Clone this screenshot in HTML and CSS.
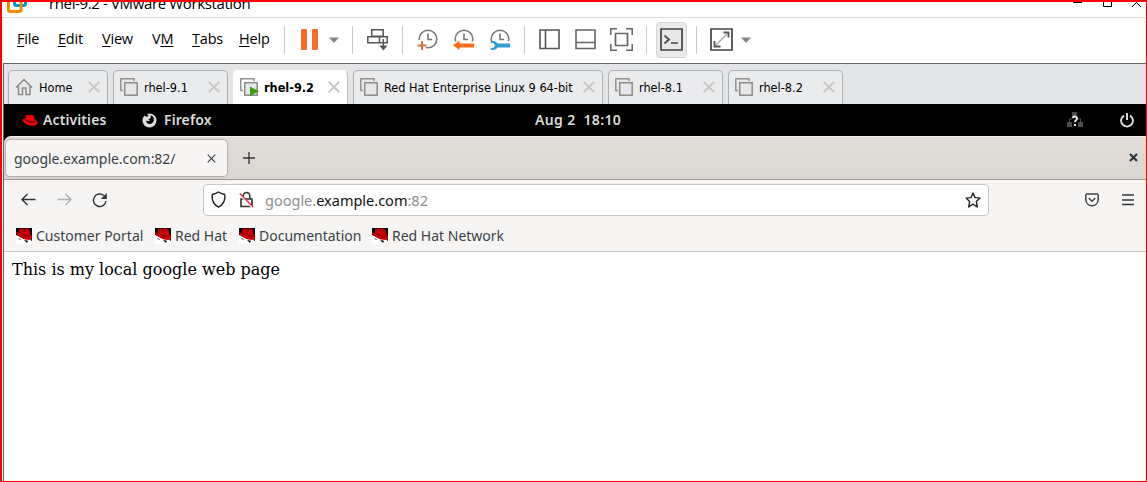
FILE: index.html
```html
<!DOCTYPE html>
<html lang="en">
<head>
<meta charset="utf-8">
<title>rhel-9.2 - VMware Workstation</title>
<link rel="stylesheet" href="styles.css">
</head>
<body>
<svg width="0" height="0" class="defs">
  <defs>
    <symbol id="vm" viewBox="0 0 18 18"><path d="M3 12.500H.8V.8H14V3" fill="none" stroke="#929292" stroke-width="1.500"/><rect x="4.700" y="4.700" width="12.500" height="12.500" fill="#e6e7e9" stroke="#8b8b8b" stroke-width="1.500"/></symbol>
    <symbol id="cross" viewBox="0 0 12 12"><path d="M.8.8l10.400 10.400M11.200.8L.8 11.200" stroke="#c4c4c4" stroke-width="1.800"/></symbol>
    <symbol id="clock" viewBox="0 0 22 22"><circle cx="11" cy="10" r="8.800" fill="none" stroke="#777" stroke-width="1.600"/><path d="M11 4.500v6h4" fill="none" stroke="#777" stroke-width="1.600"/></symbol>
    <symbol id="shadowman" viewBox="0 0 16 16"><path fill="#fff" d="M0 0h16v16H0z"/><path fill="#000" d="M0 0h16v12l-3-1-5 0-8-4z"/><path fill="#fff" d="M1 7.500l6 3.500 4 1 4-.5V16H0V8z"/><path fill="#c00" d="M3 1.500L5.500.5 8 1.200 11 .3l2.500 1.700 1 4.300L16 8v2.500L13.500 12 9 11.500 4 9 .3 6V4.300l3 .4z"/><path d="M3.500 4.800L7 7.300l5 1.200 2-1M7 3.200l3-.5" stroke="#600" stroke-width=".9" fill="none"/><path fill="#000" d="M8 12l4 .8-1 2.200-1-1zM2 10l3 1.200-1 .6zM14.500 12l1.500-1v2z"/></symbol>
  </defs>
</svg>
<div class="frame">
  <header class="titlebar">
    <svg class="logo" width="20" height="20" viewBox="0 0 20 20"><rect x="7.500" y="1.500" width="11" height="11" rx="2" fill="none" stroke="#0095d3" stroke-width="3"/><path d="M5 6.500H3.500a2 2 0 0 0-2 2v8a2 2 0 0 0 2 2h8.500a2 2 0 0 0 2-2V9" fill="none" stroke="#f38b00" stroke-width="3"/></svg>
    <span class="title">rhel-9.2 - VMware Workstation</span>
    <svg class="winctl" width="72" height="8" viewBox="0 0 72 8"><path d="M0 .5h9" stroke="#000"/><path d="M30.500 0v4.500h8V0M59 5l4.500-4.500L68 5" fill="none" stroke="#000"/></svg>
  </header>

  <nav class="toolbar">
    <span class="menu m-file"><u>F</u>ile</span>
    <span class="menu m-edit"><u>E</u>dit</span>
    <span class="menu m-view"><u>V</u>iew</span>
    <span class="menu m-vm">V<u>M</u></span>
    <span class="menu m-tabs"><u>T</u>abs</span>
    <span class="menu m-help"><u>H</u>elp</span>
    <i class="sep"></i>
    <svg class="pause" width="18" height="22"><path d="M.5.5h5v20h-5zM11.500.5h5v20h-5z" fill="#ff6a1c" stroke="#e2733a"/></svg>
    <svg class="caret c1" width="10" height="6"><path d="M0 .5h10L5 6z" fill="#858585"/></svg>
    <i class="sep s2"></i>
    <svg class="send" width="22" height="22" fill="none" stroke="#555" stroke-width="1.500"><path d="M4.700.8h11.500v6.500H4.700zM.8 7.700h11.700v6H.8zM12.500 7.700h7.700v6h-7.700M16.300 10v9"/><path d="M12.300 16.500h8.200L16.400 21.500z" fill="#555" stroke="none"/></svg>
    <i class="sep s3"></i>
    <svg class="snap1" width="22" height="22"><use href="#clock" width="22" height="22"/><path d="M0 11h5v1h4V21H0z" fill="#fff"/><path d="M5 12v9M.5 16.500h9" stroke="#d8714c" stroke-width="2"/></svg>
    <svg class="snap2" width="22" height="22"><use href="#clock" width="22" height="22"/><path d="M0 12.500h22V22H0z" fill="#fff"/><path d="M0 16.300L6.500 11.500v3H21v4H6.500v2.500z" fill="#ff6a1c"/></svg>
    <svg class="snap3" width="22" height="22"><use href="#clock" width="22" height="22"/><path d="M0 12h22v10H0z" fill="#fff"/><path d="M1.500 12.500c3.500-1 6 0 7 2h12.500v4H8.500c-1 2-4 3-7.500 2l1-1.500h2.500l1.500-2.500-1.500-2.500H2z" fill="#2e9bd8"/></svg>
    <i class="sep s4"></i>
    <svg class="side" width="21" height="21"><path d="M1 1h19v18.500H1zM6.500 1v18.500" fill="none" stroke="#555" stroke-width="1.600"/></svg>
    <svg class="bottom" width="21" height="21"><path d="M1 1h19v18.500H1zM1 13.500h19" fill="none" stroke="#666" stroke-width="1.600"/></svg>
    <svg class="full" width="23" height="23" fill="none" stroke="#666"><path d="M.8 7V.8H7M16 .8h6.200V7M22.200 16v6.200H16M7 22.200H.8V16" stroke-width="1.500"/><path d="M5.500 5.500h12v12h-12z" stroke-width="1.700"/></svg>
    <i class="sep s5"></i>
    <span class="console"><svg width="23" height="23"><path d="M1 1h21v21H1z" fill="#e6e8e9" stroke="#444" stroke-width="1.700"/><path d="M4.500 7.500l4.500 4-4.500 4" fill="none" stroke="#555" stroke-width="2"/><path d="M11 15h7" stroke="#444" stroke-width="1.500"/></svg></span>
    <i class="sep s6"></i>
    <svg class="stretch" width="23" height="23" fill="none"><path d="M1 1h21v21H1z" stroke="#444" stroke-width="1.700"/><path d="M6 17L17 6" stroke="#aaa" stroke-width="1.500"/><path d="M13.500 4.500h5v5M4.500 13v5.500h6" stroke="#555" stroke-width="1.800"/></svg>
    <svg class="caret c2" width="10" height="6"><path d="M0 .5h10L5 6z" fill="#858585"/></svg>
  </nav>

  <section class="guest">
    <div class="vmtabs">
      <div class="vmtab home"><svg width="18" height="18" viewBox="0 0 18 18"><path d="M1 9.500L9 1.500l8 8M3.500 8v8.500h4V10h3.500v6.500h4V8" fill="none" stroke="#8b8b8b" stroke-width="1.500"/></svg><span>Home</span><svg class="x"><use href="#cross"/></svg></div>
      <div class="vmtab"><svg width="18" height="18"><use href="#vm"/></svg><span>rhel-9.1</span><svg class="x"><use href="#cross"/></svg></div>
      <div class="vmtab active"><svg width="19" height="18"><use href="#vm" width="18" height="18"/><path d="M10 8.500l9 4.700-9 4.800z" fill="#3f9c12"/></svg><span>rhel-9.2</span><svg class="x"><use href="#cross"/></svg></div>
      <div class="vmtab wide"><svg width="18" height="18"><use href="#vm"/></svg><span>Red Hat Enterprise Linux 9 64-bit</span><svg class="x"><use href="#cross"/></svg></div>
      <div class="vmtab"><svg width="18" height="18"><use href="#vm"/></svg><span>rhel-8.1</span><svg class="x"><use href="#cross"/></svg></div>
      <div class="vmtab"><svg width="18" height="18"><use href="#vm"/></svg><span>rhel-8.2</span><svg class="x"><use href="#cross"/></svg></div>
    </div>

    <div class="gnome">
      <svg class="hat" width="16" height="13" viewBox="0 0 16 13"><path d="M4 1.500C5 .5 6 .8 7.300 1.300 9 .7 11 .8 12 2l1 4c2 .7 3 1.800 2.500 3.500C14.500 12.500 9 12.500 5 10.500 2 9 0 7.200.3 5.800.6 4.800 2 4.600 3.200 4.700z" fill="#e00"/><path d="M3 5c0 1.500 7 4.200 10 2.500" fill="none" stroke="#300" stroke-width="1.100"/></svg>
      <span class="activities">Activities</span>
      <svg class="fox" width="15" height="15" viewBox="0 0 15 15"><circle cx="7.500" cy="7.500" r="7" fill="#ddd"/><path d="M3.500 0L6.500 2.200 5.500 3.800 3 3.200 1.500 0z" fill="#000"/><path d="M8.500 2.600c2.700.4 3.700 2.400 3.300 4.700-.4 2.600-2.600 4-4.900 3.600C5 10.500 4 9 4.200 7.500L6 8.300l2-.8L6.300 6.300 8.800 5z" fill="#000"/></svg>
      <span class="firefox">Firefox</span>
      <span class="clock">Aug 2&nbsp; 18:10</span>
      <svg class="net" width="16" height="16"><path d="M5 0h5v4H5zM0 10h5v5H0zM11 10h5v5h-5z" fill="#4d4d4d"/><path d="M2.500 10V7H5M11 7h2.500v3" fill="none" stroke="#4d4d4d"/><path d="M5.700 6.200C6 4 10 4 10 6.400 10 8.300 8 8 8 10.200" fill="none" stroke="#eee" stroke-width="1.900"/><path d="M7 12h2v2H7z" fill="#eee"/></svg>
      <svg class="power" width="14" height="15"><path d="M4 2.600A5.900 5.900 0 1 0 10 2.600M7 0v7" fill="none" stroke="#e3e3e3" stroke-width="1.900"/></svg>
    </div>

    <div class="browser">
      <div class="tabstrip">
        <div class="tab"><span>google.example.com:82/</span><svg width="9" height="9"><path d="M.7.7l7.600 7.600M8.300.7L.7 8.300" stroke="#3b4245" stroke-width="1.100"/></svg></div>
        <svg class="plus" width="12" height="12"><path d="M6 0v12M0 6h12" stroke="#2e3436" stroke-width="1.300"/></svg>
        <svg class="close" width="9" height="9"><path d="M1 1l7 7M8 1L1 8" stroke="#2e3436" stroke-width="2.200"/></svg>
      </div>
      <div class="navbar">
        <svg class="back" width="15" height="13"><path d="M14.500 6.500H1M6.500 1L1 6.500 6.500 12" fill="none" stroke="#2e3436" stroke-width="1.400"/></svg>
        <svg class="fwd" width="15" height="13"><path d="M.5 6.500H14M8.500 1L14 6.500 8.500 12" fill="none" stroke="#aeb0b0" stroke-width="1.400"/></svg>
        <svg class="reload" width="16" height="16"><path d="M14 9A6.300 6.300 0 1 1 12 3.600" fill="none" stroke="#2e3436" stroke-width="1.400"/><path d="M14.800 1v6h-6z" fill="#2e3436"/></svg>
        <div class="urlbar">
          <svg class="shield" width="15" height="17"><path d="M7.500 1C5.500 2.500 3.500 3 1.300 3.500c-.8 6 1 10 6.200 12.500 5.200-2.500 7-6.500 6.200-12.500C11.500 3 9.500 2.500 7.500 1z" fill="none" stroke="#222" stroke-width="1.400"/></svg>
          <svg class="lock" width="15" height="17"><path d="M4.200 8V4.800a3.300 3.300 0 0 1 6.600 0V8M2 8h11v7.500H2z" fill="none" stroke="#333" stroke-width="1.600"/><path d="M.8 3.500L13.500 16.500" stroke="#fff" stroke-width="2"/><path d="M.8 2.500L14.200 16" stroke="#e22850" stroke-width="1.400"/></svg>
          <span class="url">google.<b>example.com</b>:82</span>
          <svg class="star" width="16" height="16"><path d="M8 1l2 4.600 5 .5-3.700 3.400 1 5.500L8 12.200 3.700 15l1-5.500L1 6.100l5-.5z" fill="none" stroke="#222" stroke-width="1.400" stroke-linejoin="round"/></svg>
        </div>
        <svg class="pocket" width="14" height="14"><path d="M2 1h10q1.200 0 1.200 1.200V6C13.200 15 .8 15 .8 6V2.200Q.8 1 2 1z" fill="none" stroke="#3c4144" stroke-width="1.500"/><path d="M3.700 5L7 8.200 10.300 5" fill="none" stroke="#3c4144" stroke-width="1.500"/></svg>
        <svg class="burger" width="12" height="12"><path d="M0 1h12M0 6h12M0 10.500h12" stroke="#2e3436" stroke-width="1.300"/></svg>
      </div>
      <div class="bookmarks">
        <a class="b1"><svg width="16" height="16"><use href="#shadowman"/></svg><span>Customer Portal</span></a>
        <a class="b2"><svg width="16" height="16"><use href="#shadowman"/></svg><span>Red Hat</span></a>
        <a class="b3"><svg width="16" height="16"><use href="#shadowman"/></svg><span>Documentation</span></a>
        <a class="b4"><svg width="16" height="16"><use href="#shadowman"/></svg><span>Red Hat Network</span></a>
      </div>
      <main class="page">This is my local google web page</main>
    </div>
  </section>
</div>
</body>
</html>
```
FILE: styles.css
```css
* { box-sizing: border-box; }
body { margin: 0; width: 1147px; height: 482px; overflow: hidden; background: #fff; font-family: "Noto Sans", sans-serif; color: #000; }
.defs { display: none; }
svg { display: block; flex: none; }
span { white-space: nowrap; }
.frame { width: 1147px; height: 482px; border: 2px solid #f00; border-right-width: 1px; border-bottom-width: 1px; display: flex; flex-direction: column; }

.titlebar { height: 16px; flex: none; display: flex; align-items: flex-start; overflow: hidden; border-bottom: 1px solid #dcdcdc; padding-left: 5px; }
.logo { margin-top: -9px; }
.title { margin: -4px 0 0 22px; width: 900px; font: 15px/10px "Open Sans", sans-serif; letter-spacing: -.37px; }
.winctl { margin: 0 0 0 124px; }

.toolbar { height: 45px; flex: none; display: flex; align-items: flex-start; padding-left: 15px; }
.menu { font: 14.5px/20px "Open Sans", sans-serif; margin-top: 11px; letter-spacing: -.2px; width: 41px; }
.menu u { text-underline-offset: 2px; text-decoration-thickness: 1px; }
.m-edit { width: 44px; }
.m-view { width: 50px; }
.m-vm { width: 40px; }
.m-tabs { width: 47px; }
.m-help { width: 45px; }
.sep { width: 1px; height: 28px; margin-top: 8px; background: #c9c9c9; flex: none; }
.pause { margin: 11px 0 0 16px; }
.caret { margin-top: 19px; }
.c1 { margin-left: 10px; }
.s2 { margin-left: 13px; }
.send { margin: 11px 0 0 14px; }
.s3 { margin-left: 13px; }
.snap1 { margin: 11px 0 0 14px; }
.snap2, .snap3 { margin: 11px 0 0 14px; }
.s4 { margin-left: 13px; }
.side { margin: 11px 0 0 14px; }
.bottom { margin: 11px 0 0 15px; }
.full { margin: 10px 0 0 14px; }
.s5 { margin-left: 13px; }
.console { width: 31px; height: 36px; margin: 4px 0 0 9px; padding: 5px 3px; background: #e8eaeb; border: 1px solid #d5d7d8; border-radius: 4px; }
.s6 { margin-left: 9px; }
.stretch { margin: 10px 0 0 13px; }
.c2 { margin-left: 8px; }

.guest { flex: 1; min-height: 0; margin-left: 1px; border-left: 1px solid #666; border-top: 1px solid #666; display: flex; flex-direction: column; }
.vmtabs { height: 40px; flex: none; display: flex; align-items: flex-end; gap: 5px; padding-left: 4px; background: #e3e4e6; }
.vmtab { width: 115px; height: 34px; display: flex; padding: 7px 7px 0 6px; border: 1px solid #aeb0b2; border-bottom: 0; border-radius: 5px 5px 0 0; background: #eaebed; }
.vmtab span { font: 12.6px/20px "DejaVu Sans Condensed", "DejaVu Sans", sans-serif; font-stretch: condensed; margin-left: 6px; flex: 1; }
.vmtab .x { width: 12px; height: 12px; margin-top: 3px; }
.vmtab.home { width: 100px; }
.vmtab.wide { width: 250px; }
.vmtab.active { background: #fff; border-color: #fff #bbb #fff #fff; }
.vmtab.active span { font-weight: bold; margin-left: 5px; }

.gnome { height: 32px; flex: none; background: #000; color: #dcdcdc; font-size: 14px; font-weight: 600; line-height: 32px; display: flex; align-items: center; padding-left: 18px; }
.activities { margin-left: 5px; width: 99px; letter-spacing: .1px; }
.firefox { margin-left: 7px; width: 371px; letter-spacing: .1px; }
.clock { width: 532px; letter-spacing: .35px; }
.power { margin-left: 37px; }

.browser { flex: 1; min-height: 0; display: flex; flex-direction: column; background: #000; }
.tabstrip { height: 44px; flex: none; display: flex; border-bottom: 1px solid #9b9691; border-top: 1px solid #f4f2f0; border-radius: 7px 0 0 0; background: linear-gradient(#e1dcd8, #dad6d2); }
.tab { width: 223px; height: 38px; margin: 2px 0 0 1px; padding: 0 11px 0 8px; display: flex; align-items: center; justify-content: space-between; background: #f6f5f4; border: 1px solid #b8b3b0; border-radius: 5px; box-shadow: 0 0 2px #9995; font-size: 14px; letter-spacing: -.05px; color: #3b4245; }
.plus { margin: 15px 0 0 15px; }
.close { margin: 16px 0 0 874px; }
.navbar { height: 38px; flex: none; display: flex; align-items: center; background: #f6f5f4; padding: 3px 0 2px 17px; }
.fwd { margin-left: 21px; }
.reload { margin-left: 20px; }
.urlbar { width: 786px; height: 32px; margin-left: 95px; display: flex; align-items: center; background: #fff; border: 1px solid #cdc7c2; border-radius: 4px; padding-left: 7px; }
.lock { margin-left: 13px; }
.url { margin-left: 11px; width: 700px; font-size: 14.5px; color: #8b8e8f; }
.url b { font-weight: 400; color: #111; }
.pocket { margin-left: 96px; }
.burger { margin-left: 23px; }
.bookmarks { height: 34px; flex: none; display: flex; align-items: center; padding: 2px 0 0 12px; background: #f6f5f4; border-bottom: 1px solid #cbc6c1; font-size: 14px; color: #3b4245; }
.bookmarks a { display: flex; align-items: center; gap: 4px; }
.b1 { width: 139px; }
.b2 { width: 84px; }
.b3 { width: 133px; }
.page { flex: 1; background: #fff; padding: 8px; font: 16px/19px "DejaVu Serif", serif; }
```
